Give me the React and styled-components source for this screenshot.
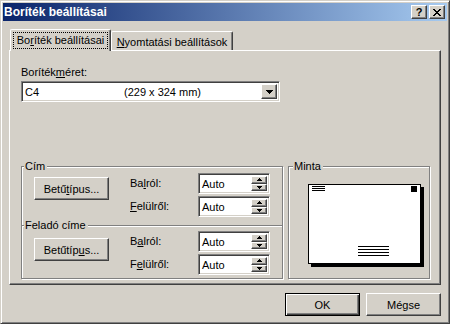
import React from 'react';
import styled, { createGlobalStyle, css } from 'styled-components';

const GlobalStyle = createGlobalStyle`
  html, body {
    margin: 0;
    padding: 0;
    background: #d4d0c8;
  }
  body {
    font-family: "Liberation Sans", Arial, sans-serif;
    font-size: 11px;
    color: #000;
  }
`;

const raised = css`
  box-sizing: border-box;
  border: 1px solid;
  border-color: #fff #404040 #404040 #fff;
  box-shadow: inset -1px -1px 0 #808080;
  background: #d4d0c8;
`;

const sunken = css`
  box-sizing: border-box;
  border: 1px solid;
  border-color: #808080 #fff #fff #808080;
  box-shadow: inset 1px 1px 0 #404040, inset -1px -1px 0 #d4d0c8;
  background: #fff;
`;

const Window = styled.div`
  width: 450px;
  height: 324px;
  box-sizing: border-box;
  border: 1px solid;
  border-color: #d4d0c8 #404040 #404040 #d4d0c8;
  box-shadow: inset 1px 1px 0 #fff, inset -1px -1px 0 #808080;
  padding: 2px;
  background: #d4d0c8;
  display: flex;
  flex-direction: column;
`;

const TitleBar = styled.div`
  height: 18px;
  flex-shrink: 0;
  display: flex;
  align-items: center;
  justify-content: space-between;
  padding: 0 2px 0 1px;
  background: linear-gradient(to right, #0a246a, #a6caf0);
`;

const Title = styled.span`
  color: #fff;
  font-weight: bold;
  font-size: 12px;
`;

const CaptionButtons = styled.div`
  display: flex;
  gap: 2px;
`;

const CaptionButton = styled.div`
  ${raised};
  width: 16px;
  height: 14px;
  display: flex;
  align-items: center;
  justify-content: center;
  font-weight: bold;
  font-size: 11px;
  line-height: 12px;
`;

const Body = styled.div`
  flex: 1;
  display: flex;
  flex-direction: column;
  padding: 8px 6px 0 6px;
`;

const TabStrip = styled.div`
  height: 21px;
  display: flex;
  align-items: flex-end;
  padding-left: 1px;
`;

const Tab = styled.div`
  box-sizing: border-box;
  width: ${p => p.$w}px;
  height: ${p => (p.$active ? 22 : 19)}px;
  margin-bottom: ${p => (p.$active ? -1 : 0)}px;
  position: relative;
  z-index: ${p => (p.$active ? 1 : 0)};
  background: #d4d0c8;
  border-top: 1px solid #fff;
  border-left: 1px solid #fff;
  border-right: 1px solid #404040;
  border-radius: 2px 2px 0 0;
  box-shadow: inset -1px 0 0 #808080;
  display: flex;
  align-items: center;
  justify-content: center;
  padding-top: ${p => (p.$active ? 0 : 2)}px;
`;

const FocusText = styled.span`
  outline: 1px dotted #000;
  padding: 1px 3px;
  line-height: 13px;
`;

const Mn = styled.span`
  text-decoration: underline;
`;

const Panel = styled.div`
  box-sizing: border-box;
  height: 235px;
  border: 1px solid;
  border-color: #fff #404040 #404040 #fff;
  box-shadow: inset -1px -1px 0 #808080;
  padding: 15px 10px 0 11px;
  display: flex;
  flex-direction: column;
`;

const FieldLabel = styled.div`
  line-height: 13px;
  margin-bottom: 2px;
`;

const Combo = styled.div`
  ${sunken};
  width: 259px;
  height: 21px;
  padding: 2px;
  display: flex;
  align-items: stretch;
`;

const ComboSize = styled.span`
  width: 99px;
  padding-left: 1px;
  line-height: 17px;
`;

const ComboDims = styled.span`
  flex: 1;
  line-height: 17px;
`;

const DropButton = styled.div`
  ${raised};
  width: 16px;
  display: flex;
  align-items: center;
  justify-content: center;
`;

const GroupsRow = styled.div`
  margin-top: 64px;
  display: flex;
  gap: 5px;
`;

const Column = styled.div`
  display: flex;
  flex-direction: column;
  width: 262px;
`;

const GroupBox = styled.div`
  position: relative;
  box-sizing: border-box;
  width: ${p => p.$w}px;
  height: ${p => p.$h}px;
  margin-top: ${p => p.$overlap ? -1 : 0}px;
  border: 1px solid #808080;
  box-shadow: 1px 1px 0 #fff, inset 1px 1px 0 #fff;
  padding: ${p => p.$top}px 0 0 12px;
`;

const Legend = styled.span`
  position: absolute;
  top: -7px;
  left: ${p => p.$left}px;
  padding: 0 2px 0 1px;
  line-height: 13px;
  background: #d4d0c8;
`;

const GroupBody = styled.div`
  display: flex;
  align-items: flex-start;
`;

const PushButton = styled.div`
  ${raised};
  width: 75px;
  height: 23px;
  margin-top: ${p => p.$mt || 0}px;
  display: flex;
  align-items: center;
  justify-content: center;
  ${p => p.$default && css`
    border: 1px solid #000;
    box-shadow: inset 1px 1px 0 #fff, inset -1px -1px 0 #404040, inset -2px -2px 0 #808080;
  `}
`;

const FieldGrid = styled.div`
  margin-left: 21px;
  display: grid;
  grid-template-columns: 68px 72px;
  row-gap: 2px;
  align-items: center;
`;

const RowLabel = styled.span`
  line-height: 13px;
`;

const SpinField = styled.div`
  ${sunken};
  height: 21px;
  padding: 2px;
  display: flex;
`;

const SpinValue = styled.span`
  flex: 1;
  line-height: 17px;
  padding-left: 1px;
`;

const SpinButtons = styled.div`
  width: 16px;
  display: flex;
  flex-direction: column;
`;

const SpinButton = styled.div`
  ${raised};
  flex: 1;
  display: flex;
  align-items: center;
  justify-content: center;
`;

const Preview = styled.div`
  display: flex;
  justify-content: center;
  padding-left: 1px;
`;

const Footer = styled.div`
  margin-top: 8px;
  display: flex;
  justify-content: flex-end;
  gap: 6px;
`;

const CloseGlyph = () => (
  <svg width="8" height="7" viewBox="0 0 8 7">
    <path d="M0 0h2v1H0zM6 0h2v1H6zM1 1h2v1H1zM5 1h2v1H5zM2 2h4v1H2zM3 3h2v1H3zM2 4h4v1H2zM1 5h2v1H1zM5 5h2v1H5zM0 6h2v1H0zM6 6h2v1H6z" fill="#000" />
  </svg>
);

const DownArrow = () => (
  <svg width="7" height="4" viewBox="0 0 7 4">
    <path d="M0 0h7v1H0zM1 1h5v1H1zM2 2h3v1H2zM3 3h1v1H3z" fill="#000" />
  </svg>
);

const SpinArrow = ({ up }) => (
  <svg width="5" height="3" viewBox="0 0 5 3">
    <path
      d={up ? 'M2 0h1v1H2zM1 1h3v1H1zM0 2h5v1H0z' : 'M0 0h5v1H0zM1 1h3v1H1zM2 2h1v1H2z'}
      fill="#000"
    />
  </svg>
);

const Envelope = () => (
  <svg width="116" height="83" viewBox="0 0 116 83">
    <rect x="3" y="3" width="113" height="80" fill="#000" />
    <rect x="0.5" y="0.5" width="112" height="79" fill="#fff" stroke="#000" />
    <g stroke="#000" strokeWidth="1">
      <line x1="4" y1="2.5" x2="17" y2="2.5" />
      <line x1="4" y1="4.5" x2="17" y2="4.5" />
      <line x1="4" y1="6.5" x2="17" y2="6.5" />
      <line x1="50" y1="62.5" x2="81" y2="62.5" />
      <line x1="50" y1="65.5" x2="81" y2="65.5" />
      <line x1="50" y1="68.5" x2="81" y2="68.5" />
      <line x1="50" y1="71.5" x2="81" y2="71.5" />
    </g>
    <rect x="103" y="2" width="6" height="6" fill="#000" />
  </svg>
);

const Spin = ({ value }) => (
  <SpinField>
    <SpinValue>{value}</SpinValue>
    <SpinButtons>
      <SpinButton><SpinArrow up /></SpinButton>
      <SpinButton><SpinArrow /></SpinButton>
    </SpinButtons>
  </SpinField>
);

const App = () => {
  return (
    <>
      <GlobalStyle />
      <Window>
        <TitleBar>
          <Title>Boríték beállításai</Title>
          <CaptionButtons>
            <CaptionButton>?</CaptionButton>
            <CaptionButton><CloseGlyph /></CaptionButton>
          </CaptionButtons>
        </TitleBar>
        <Body>
          <TabStrip>
            <Tab $active $w={101}>
              <FocusText>Bo<Mn>r</Mn>íték beállításai</FocusText>
            </Tab>
            <Tab $w={122}>
              <span><Mn>N</Mn>yomtatási beállítások</span>
            </Tab>
          </TabStrip>
          <Panel>
            <FieldLabel>Boríték<Mn>m</Mn>éret:</FieldLabel>
            <Combo>
              <ComboSize>C4</ComboSize>
              <ComboDims>(229 x 324 mm)</ComboDims>
              <DropButton><DownArrow /></DropButton>
            </Combo>
            <GroupsRow>
              <Column>
                <GroupBox $w={262} $h={60} $top={6}>
                  <Legend $left={2}>Cím</Legend>
                  <GroupBody>
                    <PushButton $mt={4}>Betű<Mn>t</Mn>ípus...</PushButton>
                    <FieldGrid>
                      <RowLabel>Ba<Mn>l</Mn>ról:</RowLabel>
                      <Spin value="Auto" />
                      <RowLabel><Mn>F</Mn>elülről:</RowLabel>
                      <Spin value="Auto" />
                    </FieldGrid>
                  </GroupBody>
                </GroupBox>
                <GroupBox $w={262} $h={54} $top={5} $overlap>
                  <Legend $left={2}>Feladó címe</Legend>
                  <GroupBody>
                    <PushButton $mt={7}>Betűtíp<Mn>u</Mn>s...</PushButton>
                    <FieldGrid>
                      <RowLabel>B<Mn>a</Mn>lról:</RowLabel>
                      <Spin value="Auto" />
                      <RowLabel>F<Mn>e</Mn>lülről:</RowLabel>
                      <Spin value="Auto" />
                    </FieldGrid>
                  </GroupBody>
                </GroupBox>
              </Column>
              <GroupBox $w={142} $h={113} $top={17}>
                <Legend $left={4}>Minta</Legend>
                <Preview>
                  <Envelope />
                </Preview>
              </GroupBox>
            </GroupsRow>
          </Panel>
          <Footer>
            <PushButton $default>OK</PushButton>
            <PushButton>Mégse</PushButton>
          </Footer>
        </Body>
      </Window>
    </>
  );
};

export default App;
